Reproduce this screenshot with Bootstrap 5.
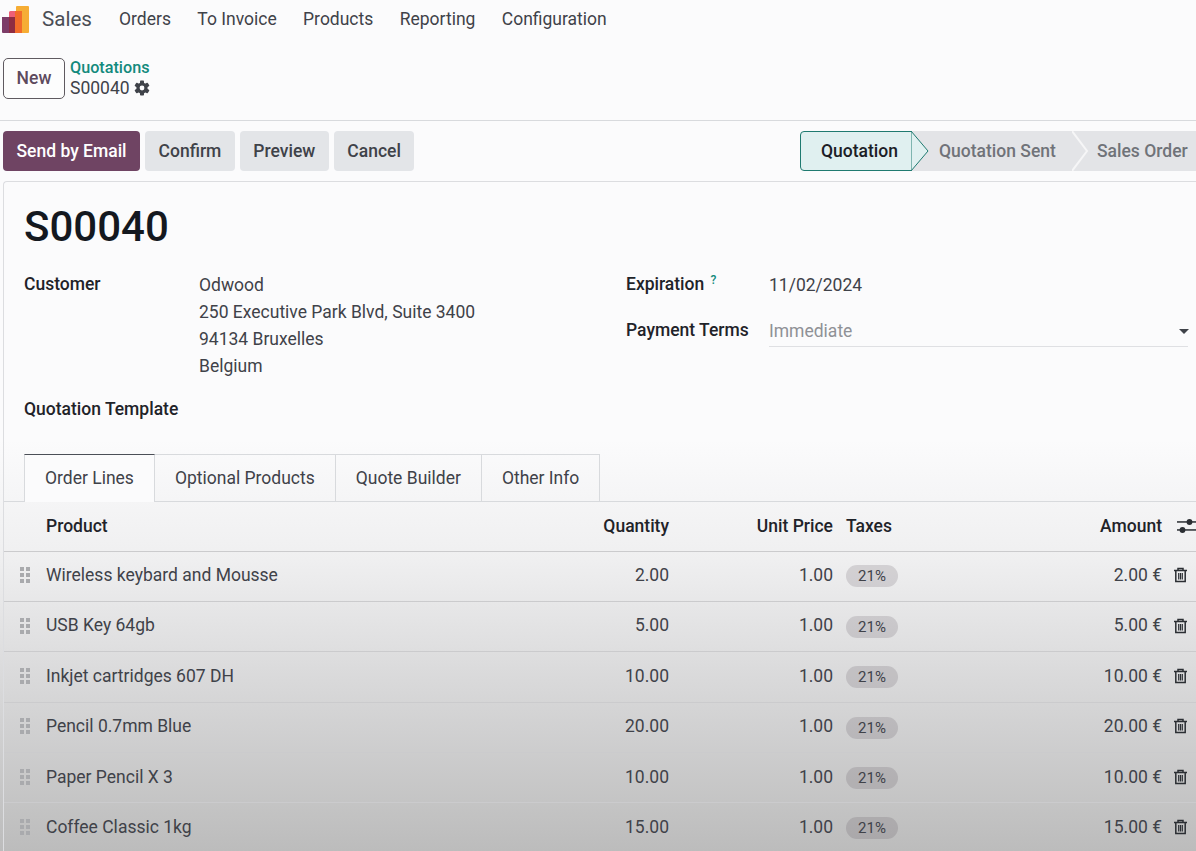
<!DOCTYPE html>
<html lang="en"><head><meta charset="utf-8"><title>S00040</title>
<link href="https://cdn.jsdelivr.net/npm/bootstrap@5.3.0/dist/css/bootstrap.min.css" rel="stylesheet">
<style>
html,body{height:851px;overflow:hidden}
body{font-family:Roboto,"Liberation Sans",sans-serif;font-size:17.5px;color:#3f4249;background:linear-gradient(180deg,#fbfbfc 0,#fbfbfc 440px,#efeff0 560px,#d9d9da 680px,#bcbcbc 851px)}
.top-bar{height:37px;padding-top:2px;color:#3f4249}
.top-bar .brand-name{font-size:20.6px;margin:0 27px 0 12px;color:#4a4d55}
.top-bar .menu-item{margin-right:26.4px}
.panel-head{height:84px;padding-left:3px;border-bottom:1px solid #d8dadd}
.new-btn{width:62px;height:41px;border:1px solid #5f5a60;border-radius:5px;color:#5e4a5e;font-weight:500;background:#fdfdfd;padding:0;font-size:17.5px;margin-top:21px}
.crumbs{margin:21px 0 0 5px;line-height:20px}
.crumb-link{color:#138a7d;font-weight:500;font-size:16.2px}
.action-row{height:60px;padding-left:3px;gap:5px}
.act{height:40px;border:0;border-radius:4px;font-weight:500;background:#e3e5e8;color:#3f4249;padding:0 13.5px;font-size:17.5px}
.act-main{background:#6f4463;color:#fff}
.steps{height:40px;margin-left:auto}
.step{display:flex;align-items:center;position:relative;height:40px;background:#e3e4e7;color:#707379;font-weight:500}
.step-on{width:112px;background:#e0f0f0;border:1px solid #1f7a70;border-radius:4px 0 0 4px;color:#1b2026;justify-content:flex-end;padding-right:13px}
.step-mid{width:161px;padding-left:27px}
.step-end{width:123px;padding-left:24px}
.arrow{position:absolute;top:-1px;left:100%;width:18px;height:40px;z-index:2}
.step-mid .arrow{top:0;left:calc(100% - 1px)}
.sheet{margin-left:3px;border:solid #dcdde0;border-width:1px 0 0 1px;border-radius:4px 0 0 0;height:670px}
.doc-title{font-size:42px;font-weight:500;color:#14181f;line-height:50px;margin:0;padding:20px 0 0 20px;height:80px}
.form-cols{height:192px;padding-left:20px}
.lbl{font-weight:500;color:#1f2329}
.left-col{width:602px}
.left-col .lbl{width:175px;flex:none}
.lbl-down{padding-top:9px}
.addr{line-height:27px;padding-top:10px}
.tpl-lbl{margin-top:16px;width:auto!important}
.right-col{flex:1}
.right-col .lbl{width:143px;flex:none}
.help{color:#138a7d;font-size:12px;vertical-align:6px;margin-left:2px}
.date-val{padding-top:10px}
.field-line{border-bottom:1px solid #dfe0e3;height:32px;margin-right:8px;color:#8f9196;flex:1;padding-top:5px;line-height:22px}
.caret-down{width:0;height:0;border:5px solid transparent;border-top-color:#3f4249;border-bottom:0;margin-top:9px;margin-right:-1px}
.pay-row{margin-top:17px}
.pay-lbl{padding-top:2px}
.tab-row{padding-left:20px;height:48px;border-bottom:1px solid #d8dadd}
.tab-cell{height:48px;padding:0 20px;display:flex;align-items:center;border:solid #d8dadd;border-width:1px 1px 0 0}
.tab-on{border-top-color:#4b4f57;border-left-width:1px;background:#fbfbfc}
.lines{width:100%;table-layout:fixed;border-collapse:collapse}
.lines th,.lines td{padding:0;vertical-align:middle;border-bottom:1px solid #cbcbcd;background:transparent;color:#3f4249}
.lines th{height:49px;font-weight:500;color:#1f2329}
.lines td{height:50.4px;padding-bottom:2px}
.grip{display:grid;grid-template-columns:4px 4px;gap:2px;margin-left:16px;width:10px}
.grip i{height:4px;background:#a9aaad;display:block}
.pill{display:inline-block;width:52px;height:22px;line-height:22px;border-radius:11px;background:rgba(70,55,70,.16);text-align:center;font-size:15px;color:#3f4249;vertical-align:middle}
.lines .tcell{padding-left:13px}
.lines .trash-cell{padding-left:11px}
.lines .opt-cell{padding-left:15px}
</style></head><body>
<nav class="top-bar d-flex align-items-center">
<svg width="30" height="35" viewBox="0 0 30 35"><path d="M2 15h13v16H3a1 1 0 0 1-1-1z" fill="#7d3c68"/><path d="M9 10a2 2 0 0 1 2-1h11v22H9z" fill="#ee5f77"/><rect x="9" y="15" width="6" height="16" fill="#8f2c42"/><path d="M16 5a1 1 0 0 1 1-1h11a1 1 0 0 1 1 1v25a1 1 0 0 1-1 1H16z" fill="#f6ad35"/><rect x="15" y="9" width="7" height="22" fill="#f26b2a"/></svg>
<span class="brand-name">Sales</span><span class="menu-item">Orders</span><span class="menu-item">To Invoice</span><span class="menu-item">Products</span><span class="menu-item">Reporting</span><span class="menu-item">Configuration</span>
</nav>
<div class="panel-head d-flex align-items-start">
<button class="new-btn" type="button">New</button>
<div class="crumbs"><div class="crumb-link">Quotations</div><div class="d-flex align-items-center gap-1">S00040
<svg width="16" height="16" viewBox="0 0 16 16"><g fill="#3f4249"><circle cx="8" cy="8" r="5.6"/><rect x="6" y="0.4" width="4" height="15.2" rx=".8"/><rect x="6" y="0.4" width="4" height="15.2" rx=".8" transform="rotate(60 8 8)"/><rect x="6" y="0.4" width="4" height="15.2" rx=".8" transform="rotate(120 8 8)"/></g><circle cx="8" cy="8" r="2.4" fill="#fbfbfc"/></svg></div></div>
</div>
<div class="action-row d-flex align-items-center">
<button class="act act-main" type="button">Send by Email</button><button class="act" type="button">Confirm</button><button class="act" type="button">Preview</button><button class="act" type="button">Cancel</button>
<div class="steps d-flex">
<div class="step step-on">Quotation<svg class="arrow" viewBox="0 0 18 40"><path d="M0 0 L17 20 L0 40Z" fill="#e0f0f0" stroke="#1f7a70"/></svg></div>
<div class="step step-mid">Quotation Sent<svg class="arrow" viewBox="0 0 18 40"><path d="M0 0 L15 20 L0 40" fill="none" stroke="#f6f6f7" stroke-width="2"/></svg></div>
<div class="step step-end">Sales Order</div>
</div>
</div>
<main class="sheet">
<h1 class="doc-title">S00040</h1>
<div class="form-cols d-flex">
<div class="left-col">
<div class="d-flex"><div class="lbl lbl-down">Customer</div><div class="addr">Odwood<br>250 Executive Park Blvd, Suite 3400<br>94134 Bruxelles<br>Belgium</div></div>
<div class="lbl tpl-lbl">Quotation Template</div>
</div>
<div class="right-col">
<div class="d-flex"><div class="lbl lbl-down">Expiration <span class="help">?</span></div><div class="date-val">11/02/2024</div></div>
<div class="d-flex pay-row"><div class="lbl pay-lbl">Payment Terms</div><div class="field-line d-flex justify-content-between">Immediate<span class="caret-down"></span></div></div>
</div>
</div>
<div class="tab-row d-flex"><div class="tab-cell tab-on">Order Lines</div><div class="tab-cell">Optional Products</div><div class="tab-cell">Quote Builder</div><div class="tab-cell">Other Info</div></div>
<table class="lines">
<colgroup><col style="width:42px"><col><col style="width:118px"><col style="width:164px"><col style="width:191px"><col style="width:138px"><col style="width:34px"></colgroup>
<thead><tr><th></th><th>Product</th><th class="text-end">Quantity</th><th class="text-end">Unit Price</th><th class="tcell">Taxes</th><th class="text-end">Amount</th><th class="opt-cell"><svg class="d-block" width="19" height="14" viewBox="0 0 19 14"><g fill="#2b2e33"><rect x="0" y="2.2" width="19" height="1.5"/><rect x="0" y="10.2" width="19" height="1.5"/><circle cx="12.5" cy="3" r="2.9"/><circle cx="5.5" cy="11" r="2.9"/></g></svg></th></tr></thead>
<tbody id="rows"></tbody>
</table>
</main>
<script>
var data=[["Wireless keybard and Mousse","2.00","2.00 €"],["USB Key 64gb","5.00","5.00 €"],["Inkjet cartridges 607 DH","10.00","10.00 €"],["Pencil 0.7mm Blue","20.00","20.00 €"],["Paper Pencil X 3","10.00","10.00 €"],["Coffee Classic 1kg","15.00","15.00 €"]];
var grip='<div class="grip">'+'<i></i>'.repeat(6)+'</div>';
var trash='<svg class="d-block" width="15" height="16" viewBox="0 0 15 16" fill="none" stroke="#2b2e33" stroke-width="1.5"><path d="M1 3.5H14M5 3.3V1.5H10V3.3M2.8 3.5V14.6H12.2V3.5"/><path d="M5.7 6V12.4M7.5 6V12.4M9.3 6V12.4" stroke-width="1.2"/></svg>';
document.getElementById('rows').innerHTML=data.map(function(r){return '<tr><td>'+grip+'</td><td>'+r[0]+'</td><td class="text-end">'+r[1]+'</td><td class="text-end">1.00</td><td class="tcell"><span class="pill">21%</span></td><td class="text-end">'+r[2]+'</td><td class="trash-cell">'+trash+'</td></tr>';}).join('');
</script>
<script src="https://cdn.jsdelivr.net/npm/bootstrap@5.3.0/dist/js/bootstrap.bundle.min.js"></script>
</body></html>
